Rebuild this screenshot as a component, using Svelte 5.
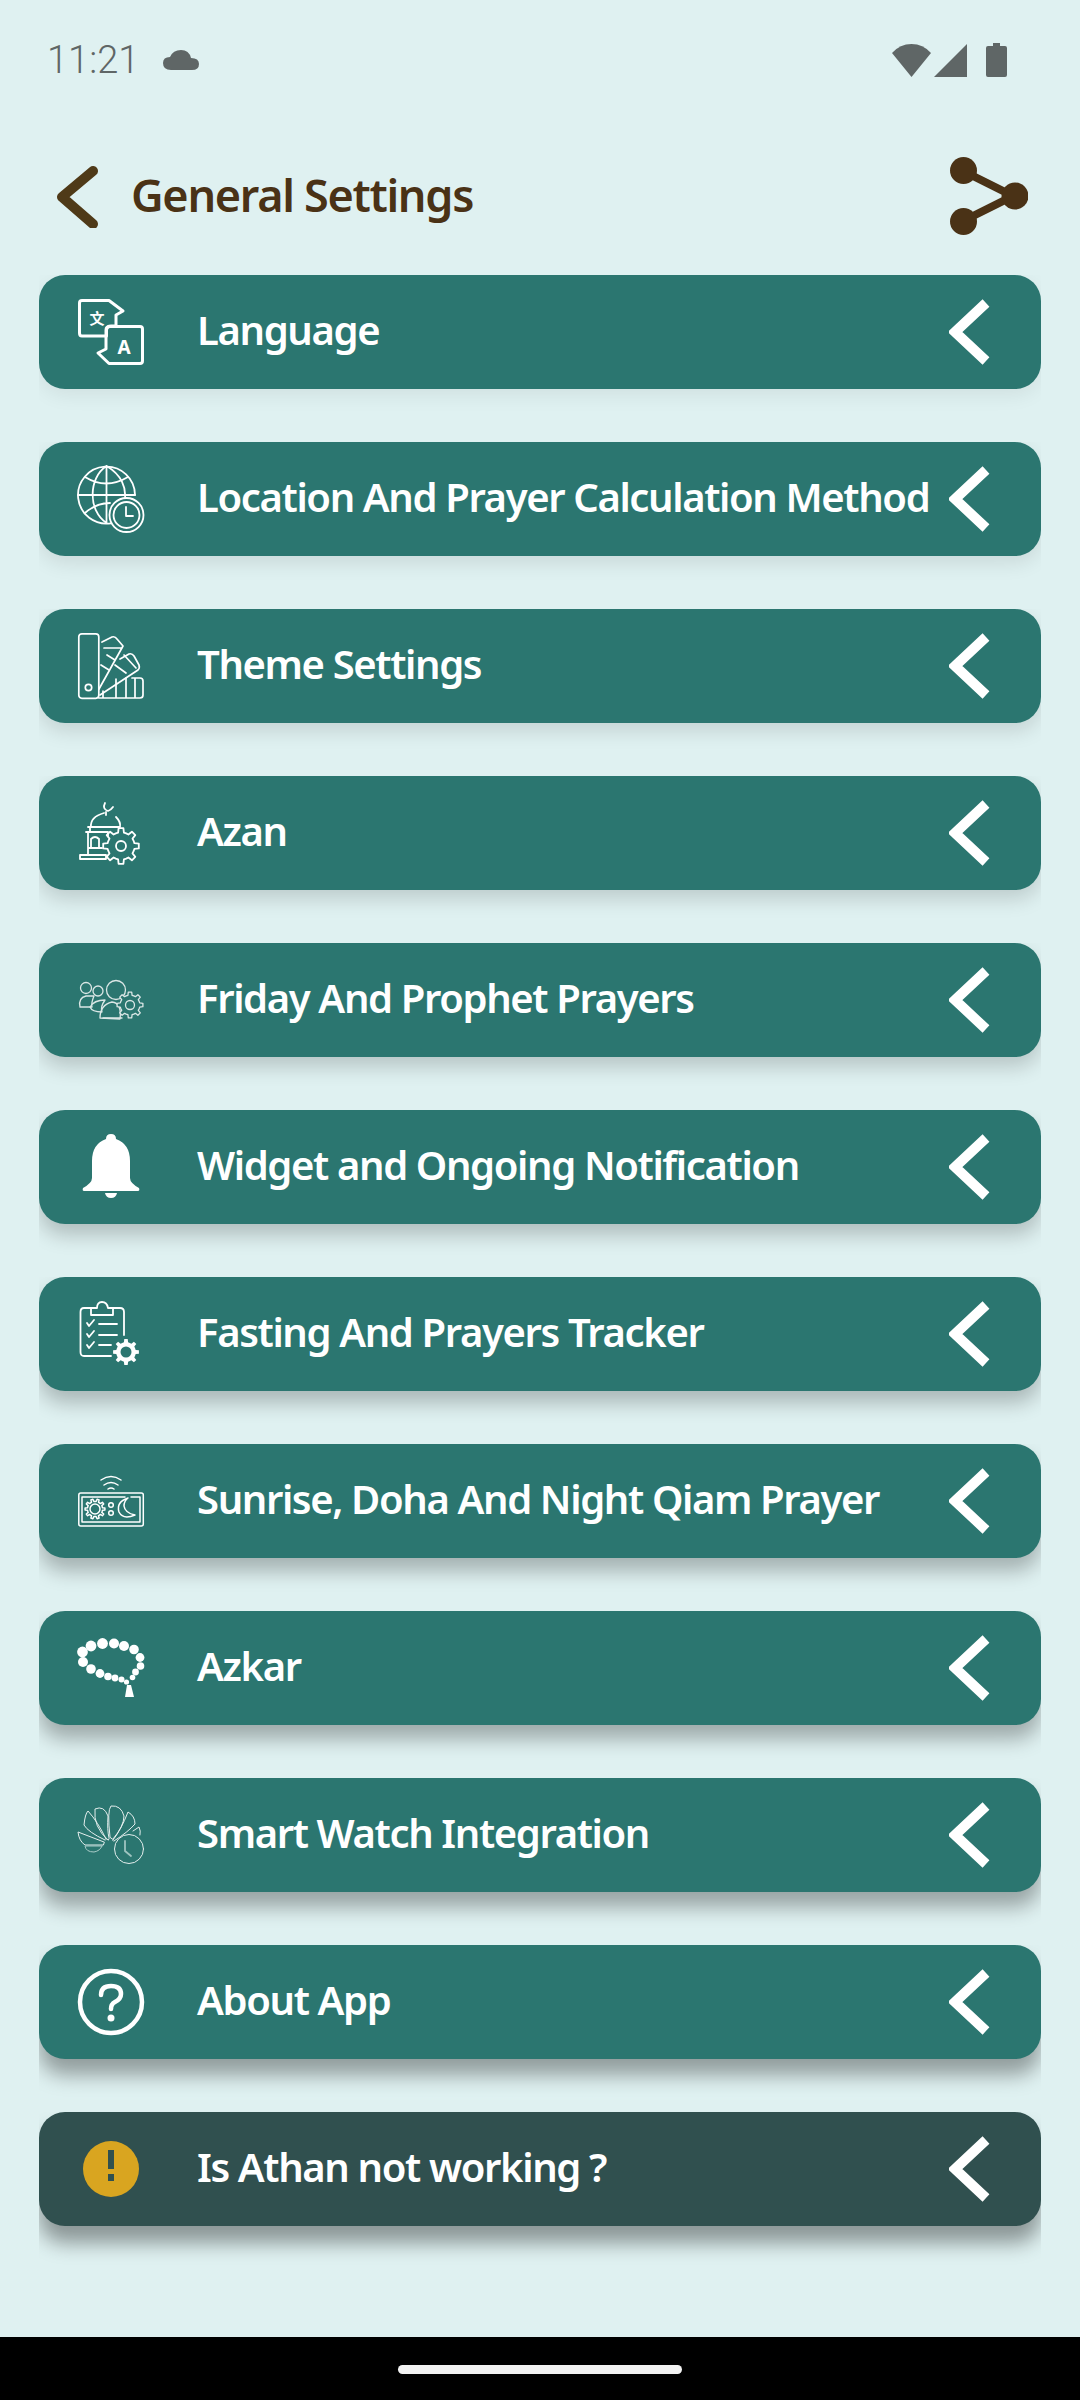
<script>
  const rows = [
    { label: 'Language', icon: 'language' },
    { label: 'Location And Prayer Calculation Method', icon: 'globe' },
    { label: 'Theme Settings', icon: 'theme' },
    { label: 'Azan', icon: 'azan' },
    { label: 'Friday And Prophet Prayers', icon: 'friday' },
    { label: 'Widget and Ongoing Notification', icon: 'bell' },
    { label: 'Fasting And Prayers Tracker', icon: 'fasting' },
    { label: 'Sunrise, Doha And Night Qiam Prayer', icon: 'sunrise' },
    { label: 'Azkar', icon: 'azkar' },
    { label: 'Smart Watch Integration', icon: 'watch' },
    { label: 'About App', icon: 'about' },
    { label: 'Is Athan not working ?', icon: 'warning', dark: true },
  ];

  // shadow gets heavier further down the screen, like the android elevation does
  function shadow(i) {
    const a = (0.07 + i * 0.028).toFixed(3);
    const y = 6 + i;
    return `--shadow: 0 ${y}px 20px rgba(0, 0, 0, ${a})`;
  }

  function gear(cx, cy, r, teeth = 8) {
    const inner = r * 0.76;
    const step = (Math.PI * 2) / teeth;
    let d = '';
    for (let i = 0; i < teeth; i++) {
      const a = i * step;
      const pts = [
        [inner, a - step * 0.5],
        [inner, a - step * 0.27],
        [r, a - step * 0.17],
        [r, a + step * 0.17],
        [inner, a + step * 0.27],
      ];
      for (const [rad, t] of pts) {
        const x = (cx + rad * Math.cos(t)).toFixed(1);
        const y = (cy + rad * Math.sin(t)).toFixed(1);
        d += (d ? 'L' : 'M') + x + ' ' + y;
      }
    }
    return d + 'Z';
  }

  const beads = [
    [4.5, 17, 5.4], [13, 11, 5.4], [24.5, 8.5, 5.4], [36, 8.5, 5], [46, 11, 5], [56, 14.5, 4.8],
    [62, 22.5, 4.4], [62.5, 31, 3.8], [57.5, 37, 3.4], [54.5, 42.5, 2.8],
    [5, 27, 5], [13, 34, 4.8], [22, 38.5, 4.4], [30, 41.5, 3.8], [37, 43, 3.4], [43.5, 44.5, 3], [48.5, 47, 2.6],
  ];
</script>

{#snippet rowIcon(name)}
  <svg class="icon" viewBox="0 0 66 66" fill="none" stroke="#fff" stroke-width="2" stroke-linecap="round" stroke-linejoin="round">
    {#if name === 'language'}
      <path stroke-width="3" d="M4 1.500H31L45 12L38 16V27H33Q29 27 28.500 31V37H4Q1.500 37 1.500 34V4Q1.500 1.500 4 1.500Z" />
      <path stroke-width="3" d="M32 27.500H62Q64.500 27.500 64.500 30V62Q64.500 64.500 62 64.500H31L20 54L28 50V31Q28 27.500 32 27.500Z" />
      <text class="glyph cjk" x="19" y="25" text-anchor="middle">文</text>
      <text class="glyph latin" x="46" y="55" text-anchor="middle">A</text>
    {:else if name === 'globe'}
      <path stroke-width="1.800" d="M33 57.300A28.500 28.500 0 1 1 57 29" />
      <path stroke-width="1.800" d="M28.500 0V57M0 29H57M28.500 0C10 12 10 45 28.500 57M28.500 0C44 9 48 22 47 32M7 11Q28 24 50 11M7 47Q18 37 32 37" />
      <circle cx="48.500" cy="49" r="17" fill="#2b7670" stroke-width="1.800" />
      <circle cx="48.500" cy="49" r="13" stroke-width="1.800" />
      <path stroke-width="1.800" d="M48 41V50H55" />
    {:else if name === 'theme'}
      <g stroke-width="1.700">
        <rect x="0.800" y="0.800" width="20" height="64.500" rx="3" />
        <circle cx="10.500" cy="54.500" r="3.200" />
        <path d="M24 9L34 4Q37 3 39 6L45 13L21 56M26 15L44 15M23 32L31 37M29 22L37 27" />
        <path d="M42 26L51 21Q54 20 56 23L61 32Q62 35 60 37L22 62M37 32L48 40M46 22L58 35" />
        <path d="M54 45H62Q65 45 65 48V62Q65 65 62 65H21M25 58V65M38 46V65M48 45V65M57 45V65" />
      </g>
    {:else if name === 'azan'}
      <g stroke-width="1.800">
        <path d="M27 3Q24 9 30 11Q33 10 35 7M28 12V15M26 13Q12 17 13 27H42Q43 22 38 17" />
        <path d="M10 27H34M12 27V32M8 32H30V36M10 32V55M2 55H28V59H2ZM13 48V39Q17 35 21 39V48M10 48H24" />
        <path d={gear(43, 46, 18, 8)} />
        <circle cx="43" cy="46" r="5" />
      </g>
    {:else if name === 'friday'}
      <g stroke-width="1.300" stroke="#dbe7e6">
        <circle cx="8" cy="21" r="5.500" />
        <circle cx="20" cy="24" r="5" />
        <circle cx="38" cy="23" r="9.500" />
        <path d="M2 40Q0 31 8 29H16Q13 36 14 40Z" />
        <path d="M12 40Q16 33 27 33Q22 40 24 45Q14 45 12 40Z" />
        <path d="M22 51Q22 38 34 35Q44 36 42 52Z" />
        <path d="M25 51H44" />
        <path d={gear(52, 38, 13, 8)} fill="#2b7670" />
        <circle cx="52" cy="38" r="4.500" />
      </g>
    {:else if name === 'bell'}
      <path fill="#fff" stroke="none" d="M33 0Q38 0 38 5Q52 10 52 27V44Q52 49 61 54Q62 57 60 57H6Q4 57 5 54Q14 49 14 44V27Q14 10 28 5Q28 0 33 0Z" />
      <path fill="#fff" stroke="none" d="M27 59H39Q38 64 33 64Q28 64 27 59Z" />
    {:else if name === 'fasting'}
      <g stroke-width="1.800">
        <path d="M33 55H6Q2.500 55 2.500 51V11Q2.500 7 6 7H13M35 7H42Q46 7 46 11V34" />
        <path d="M13 14V7H19Q19 1 24 1Q29 1 30 7H35V14Z" />
        <path d="M9 22L11 25L16 19M9 33L11 36L16 30M9 44L11 47L16 41" />
        <path d="M21 23H39M21 34H39M21 44H33" />
        <path d={gear(48, 51, 13, 8)} fill="#fff" stroke="none" />
        <circle cx="48" cy="51" r="5.500" fill="#2b7670" stroke="none" />
      </g>
    {:else if name === 'sunrise'}
      <g stroke-width="1.500">
        <path d="M23 12Q33 5 43 12M26 17Q33 12 40 17M30 21Q33 19 36 21" />
        <rect x="0.800" y="25" width="64.500" height="33" rx="2" />
        <path d="M53 29H62V54H4V29H47" />
        <path d={gear(17, 41, 10, 10)} />
        <circle cx="17" cy="41" r="5" />
        <circle cx="33" cy="37" r="2.300" />
        <circle cx="33" cy="45" r="2.300" />
        <path d="M50 30Q38 34 41 44Q45 52 57 47Q47 45 46 38Q46 33 50 30Z" />
      </g>
    {:else if name === 'azkar'}
      <g stroke="none" fill="#fff">
        {#each beads as [cx, cy, r]}
          <circle {cx} {cy} {r} />
        {/each}
        <path d="M49 50H53L56 62H47Z" />
      </g>
    {:else if name === 'watch'}
      <g stroke-width="1" stroke="#e4eeed">
        <path d="M32 35Q29 8 33 4Q43 3 46 14Q46 24 35 37Z" />
        <path d="M30 38Q15 25 17 7Q26 3 30 14Q29 28 31 36Z" />
        <path d="M27 38Q10 30 6 23Q7 12 10 9Q20 20 28 37Z" />
        <path d="M35 38Q43 28 50 10Q57 14 57 22Q50 30 36 39Z" />
        <path d="M26 40L0 30Q1 39 7 43H25Z" />
        <path d="M24 44H7Q8 50 16 50Q22 49 24 44Z" stroke="#a9cbc8" />
        <path d="M55 29L61 25Q63 29 62 33" />
        <circle cx="51" cy="47" r="14.500" fill="#2b7670" />
        <path stroke="#9ec4c0" stroke-width="1.800" d="M47 39V49L53 54" />
      </g>
    {:else if name === 'about'}
      <circle cx="33" cy="33" r="31" stroke-width="4.500" />
      <path stroke-width="4.500" d="M23 26Q23 17 33 17Q43 17 43 25Q43 30 37 33Q33 35 33 40" />
      <circle cx="33" cy="49" r="3.500" fill="#fff" stroke="none" />
    {:else if name === 'warning'}
      <circle cx="33" cy="33" r="28" fill="#d9a520" stroke="none" />
      <path fill="#30504f" stroke="none" d="M30 14H36V33H30ZM30 38H36V45H30Z" />
    {/if}
  </svg>
{/snippet}

<div class="screen">
  <div class="status">
    <span class="time">11:21</span>
    <svg class="cloud" viewBox="0 0 36 20"><path d="M8 20Q0 20 0 13Q0 7 7 7Q10 0 18 0Q26 0 28 8Q36 8 36 14Q36 20 29 20Z" /></svg>
    <span class="grow"></span>
    <svg class="wifi" viewBox="0 0 39 33"><path d="M19.500 33L0 9Q8 0 19.500 0Q31 0 39 9Z" /></svg>
    <svg class="signal" viewBox="0 0 33 33"><path d="M33 0V33H0Z" /></svg>
    <svg class="battery" viewBox="0 0 21 34"><path d="M7 0H14V3H19Q21 3 21 5V32Q21 34 19 34H2Q0 34 0 32V5Q0 3 2 3H7Z" /></svg>
  </div>

  <header class="top">
    <svg class="back" viewBox="0 0 44 64"><path d="M37 7L6 33L37 60" /></svg>
    <h1>General Settings</h1>
    <svg class="share" viewBox="0 0 78 78">
      <path d="M13 14L63 39L13 64" />
      <circle cx="13.500" cy="13.500" r="13.500" />
      <circle cx="65" cy="39" r="13.500" />
      <circle cx="13.500" cy="64.500" r="13.500" />
    </svg>
  </header>

  <div class="list">
    {#each rows as row, i}
      <div class="clip" style={shadow(i)}>
        <div class="card" class:dark={row.dark}>
          {@render rowIcon(row.icon)}
          <span class="label">{row.label}</span>
          <svg class="chev" viewBox="0 0 41 66"><path d="M37 4L6 33L37 62" /></svg>
        </div>
      </div>
    {/each}
  </div>

  <div class="grow"></div>
  <div class="navbar"><span class="pill"></span></div>
</div>

<style>
  :global(body) {
    margin: 0;
    background: #dff1f1;
  }
  .screen {
    width: 1080px;
    height: 2400px;
    display: flex;
    flex-direction: column;
    background: #dff1f1;
    font-family: "Noto Sans", "Open Sans", sans-serif;
    overflow: hidden;
  }
  .grow { flex: 1; }

  .status {
    height: 120px;
    box-sizing: border-box;
    display: flex;
    align-items: center;
    padding: 0 73px 0 47px;
    color: #5f6666;
  }
  .status svg { fill: #5f6666; display: block; }
  .time {
    font-family: Roboto, sans-serif;
    font-size: 38px;
    font-weight: 300;
  }
  .cloud { width: 36px; height: 20px; margin-left: 24px; }
  .wifi { width: 39px; height: 33px; }
  .signal { width: 33px; height: 33px; margin-left: 3px; }
  .battery { width: 21px; height: 34px; margin-left: 19px; }

  .top {
    height: 152px;
    display: flex;
    align-items: center;
    padding: 0 52px 0 56px;
    color: #4a3216;
  }
  .top h1 {
    margin: 0 0 3px 31px;
    font-size: 45px;
    font-weight: 600;
    letter-spacing: -1.3px;
    flex: 1;
  }
  .back { width: 44px; height: 64px; }
  .back path {
    fill: none;
    stroke: #4f3a18;
    stroke-width: 10;
    stroke-linecap: round;
    stroke-linejoin: round;
  }
  .share { width: 78px; height: 78px; }
  .share path { fill: none; stroke: #4a3216; stroke-width: 8; }
  .share circle { fill: #4a3216; }

  .list {
    padding-top: 3px;
    display: flex;
    flex-direction: column;
    gap: 11px;
  }
  .clip {
    margin: 0 39px;
    height: 156px;
    overflow: hidden;
  }
  .card {
    height: 114px;
    box-sizing: border-box;
    display: flex;
    align-items: center;
    padding: 0 51px 0 39px;
    background: #2b7670;
    border-radius: 26px;
    box-shadow: var(--shadow);
  }
  .card.dark { background: #30504f; }
  .icon { width: 66px; height: 66px; flex: none; overflow: visible; }
  .glyph { fill: #fff; stroke: none; font-size: 15px; font-weight: 700; }
  .glyph.cjk { font-family: "Noto Sans CJK SC", sans-serif; }
  .glyph.latin { font-family: "Noto Sans", sans-serif; font-size: 19px; }
  .label {
    flex: 1;
    min-width: 0;
    margin: 0 0 6px 53px;
    color: #fff;
    font-size: 40px;
    font-weight: 600;
    letter-spacing: -1.37px;
    white-space: nowrap;
  }
  .chev { width: 41px; height: 66px; flex: none; }
  .chev path { fill: none; stroke: #fff; stroke-width: 10; }

  .navbar {
    height: 63px;
    background: #000;
    display: flex;
    justify-content: center;
    align-items: center;
  }
  .pill {
    width: 284px;
    height: 9px;
    border-radius: 5px;
    background: #f2f2f2;
    margin-top: 1px;
  }
</style>
